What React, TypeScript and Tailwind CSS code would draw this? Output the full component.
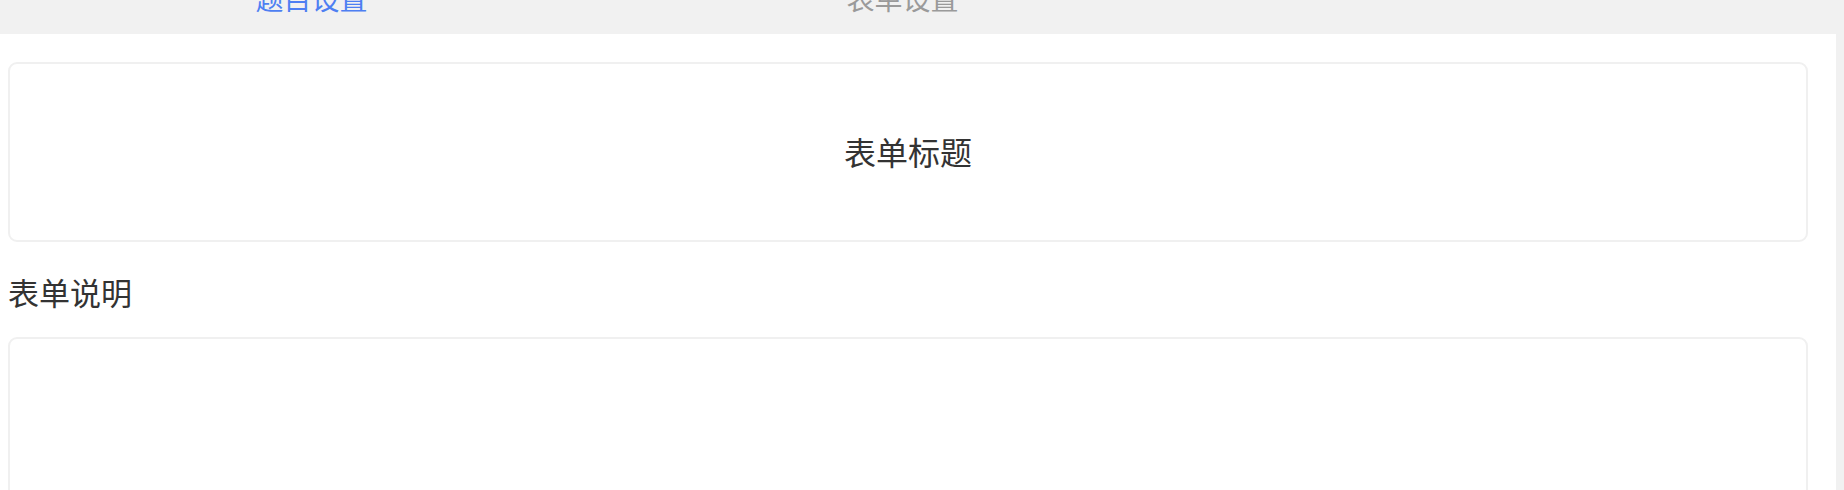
import React from "react"

const font = { fontFamily: '"Noto Sans CJK SC", "Noto Sans", sans-serif' }

export default function App() {
    return (
        <div className="w-[1844px] h-[490px] overflow-hidden bg-[#f1f1f1]" style={font}>
            {/* page is scrolled a little, so the tab row is cut at the top */}
            <div className="-mt-[16px] flex h-[50px] pl-[16px] pr-[8px]">
                <div className="w-[591px] text-center text-[28px] leading-[28px] text-[#4e7ff2]">题目设置</div>
                <div className="w-[591px] text-center text-[28px] leading-[28px] text-[#9a9a9a]">表单设置</div>
            </div>

            <div className="w-[1836px] h-[456px] bg-white pt-[28px]">
                <div className="ml-[8px] w-[1800px] h-[180px] rounded-[9px] border-2 border-[#f0f0f0] flex items-center justify-center">
                    <span className="-mt-[2px] text-[32px] text-[#333333]">表单标题</span>
                </div>

                <div className="ml-[8px] mt-[26px] h-[48px] leading-[48px] text-[31px] text-[#333333]">表单说明</div>

                <div className="ml-[8px] mt-[21px] w-[1800px] h-[200px] rounded-[9px] border-2 border-[#f0f0f0]" />
            </div>
        </div>
    )
}
